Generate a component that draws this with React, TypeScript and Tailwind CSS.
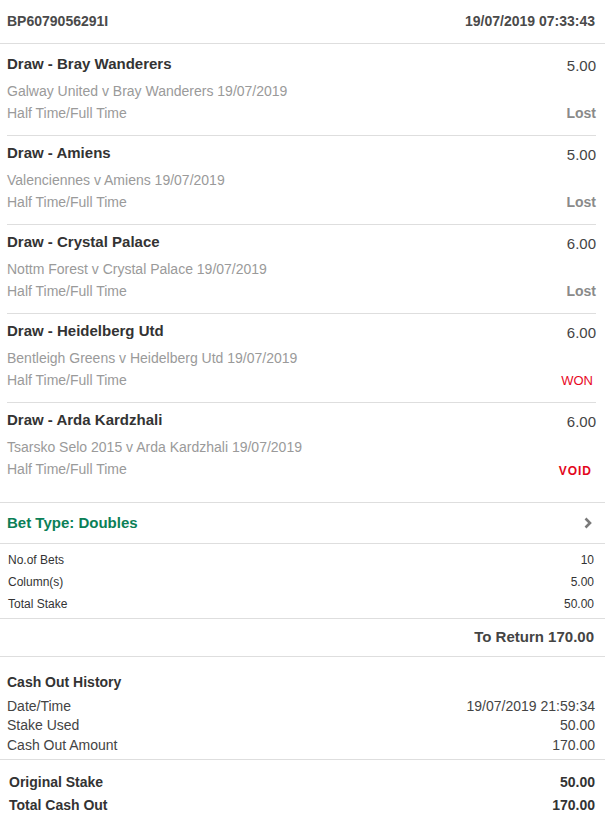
type Selection = {
  pick: string;
  odds: string;
  event: string;
  market: string;
  result: "Lost" | "WON" | "VOID";
};

const selections: Selection[] = [
  { pick: "Draw - Bray Wanderers", odds: "5.00", event: "Galway United v Bray Wanderers 19/07/2019", market: "Half Time/Full Time", result: "Lost" },
  { pick: "Draw - Amiens", odds: "5.00", event: "Valenciennes v Amiens 19/07/2019", market: "Half Time/Full Time", result: "Lost" },
  { pick: "Draw - Crystal Palace", odds: "6.00", event: "Nottm Forest v Crystal Palace 19/07/2019", market: "Half Time/Full Time", result: "Lost" },
  { pick: "Draw - Heidelberg Utd", odds: "6.00", event: "Bentleigh Greens v Heidelberg Utd 19/07/2019", market: "Half Time/Full Time", result: "WON" },
  { pick: "Draw - Arda Kardzhali", odds: "6.00", event: "Tsarsko Selo 2015 v Arda Kardzhali 19/07/2019", market: "Half Time/Full Time", result: "VOID" },
];

function Result({ result }: { result: Selection["result"] }) {
  if (result === "WON") return <span className="text-[13px] leading-[18px] text-[#e8081f] mt-[1px] mr-[3px]">WON</span>;
  if (result === "VOID")
    return <span className="text-[12px] leading-[18px] font-bold tracking-[1px] text-[#e3061b] mr-[4px] mt-[2px]">VOID</span>;
  return <span className="text-[14px] leading-[18px] font-bold text-[#8a8a8a]">Lost</span>;
}

function SelectionRow({ s, first, last }: { s: Selection; first: boolean; last: boolean }) {
  return (
    <div className={`${first ? "pt-[11px]" : "pt-[8px] border-t border-[#dedede]"} ${last ? "pb-[24px]" : "pb-[13px]"}`}>
      <div className="flex justify-between items-start h-[18px]">
        <span className="text-[15px] leading-[18px] font-bold text-[#333]">{s.pick}</span>
        <span className="text-[15px] leading-[18px] text-[#444] mt-[2px]">{s.odds}</span>
      </div>
      <div className="mt-[9px] text-[14px] leading-[18px] text-[#9a9a9a]">{s.event}</div>
      <div className="mt-[4px] flex justify-between items-start h-[18px]">
        <span className="text-[14px] leading-[18px] text-[#9a9a9a]">{s.market}</span>
        <Result result={s.result} />
      </div>
    </div>
  );
}

function Line({ label, value, className }: { label: string; value: string; className: string }) {
  return (
    <div className={`flex justify-between items-center ${className}`}>
      <span>{label}</span>
      <span>{value}</span>
    </div>
  );
}

export default function App() {
  return (
    <div className="w-[605px] h-[818px] bg-white overflow-hidden font-['Liberation_Sans',Arial,sans-serif]">
      <div className="h-[44px] flex justify-between items-center pl-[7px] pr-[10px] border-b border-[#dedede] text-[14px] font-bold text-[#4a4a4a]">
        <span>BP6079056291I</span>
        <span>19/07/2019 07:33:43</span>
      </div>

      <div className="pl-[7px] pr-[9px] border-b border-[#dedede]">
        {selections.map((s, i) => (
          <SelectionRow key={s.pick} s={s} first={i === 0} last={i === selections.length - 1} />
        ))}
      </div>

      <div className="h-[41px] flex justify-between items-center pl-[7px] pr-[13px] border-b border-[#dedede]">
        <span className="text-[15px] font-bold text-[#0b8057]">Bet Type: Doubles</span>
        <svg width="8" height="12" viewBox="0 0 8 12">
          <path d="M1.5 1.5 L6 6 L1.5 10.5" fill="none" stroke="#7a7a7a" strokeWidth="2.6" />
        </svg>
      </div>

      <div className="pt-[5px] pb-[3px] pl-[8px] pr-[11px] border-b border-[#dedede] text-[12px] text-[#333]">
        <Line label="No.of Bets" value="10" className="h-[22px]" />
        <Line label="Column(s)" value="5.00" className="h-[21px]" />
        <Line label="Total Stake" value="50.00" className="h-[23px]" />
      </div>

      <div className="h-[38px] flex justify-end items-center pr-[11px] border-b border-[#dedede] text-[15px] font-bold text-[#444]">
        To Return 170.00
      </div>

      <div className="pt-[16px] pb-[4px] pl-[7px] pr-[10px] border-b border-[#dedede] text-[14px] text-[#444]">
        <div className="leading-[18px] font-bold text-[#333] mb-[5px]">Cash Out History</div>
        <Line label="Date/Time" value="19/07/2019 21:59:34" className="h-[20px]" />
        <Line label="Stake Used" value="50.00" className="h-[19.5px]" />
        <Line label="Cash Out Amount" value="170.00" className="h-[19.5px]" />
      </div>

      <div className="pt-[11px] pl-[9px] pr-[10px] text-[14px] font-bold text-[#333]">
        <Line label="Original Stake" value="50.00" className="h-[23px]" />
        <Line label="Total Cash Out" value="170.00" className="h-[23px]" />
      </div>
    </div>
  );
}
